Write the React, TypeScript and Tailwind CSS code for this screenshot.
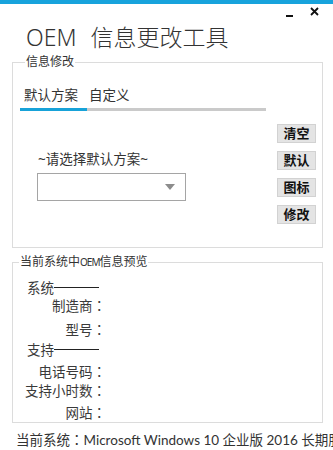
import React from "react";

const buttons = ["清空", "默认", "图标", "修改"];

// full-width colon drawn centered, as in the reference
const Colon = () => <span className="font-['Noto_Sans_CJK_TC',sans-serif] leading-none">：</span>;

export default function App() {
  return (
    <div className="h-[450px] w-[333px] overflow-hidden bg-white font-['Noto_Sans','Noto_Sans_CJK_SC',sans-serif] text-[#333]">
      {/* accent bar */}
      <div className="h-[4px] bg-[#18a3dc]" />

      {/* window controls */}
      <div className="flex h-[18px] items-center justify-end gap-[17px] pr-[14px]">
        <span className="mt-[5px] block h-[2px] w-[7px] bg-[#111]" />
        <svg width="9" height="9" viewBox="0 0 9 9" className="mt-[-3px]">
          <path d="M1 1 L8 8 M8 1 L1 8" stroke="#111" strokeWidth="1.8" />
        </svg>
      </div>

      {/* title */}
      <div className="h-[33px] pl-[26px] pt-[4px]">
        <h1 className="text-[23px] font-light leading-none">
          <span className="mr-[14px]">OEM</span>信息更改工具
        </h1>
      </div>

      {/* group 1 */}
      <fieldset className="ml-[12px] h-[193px] w-[311px] border border-[#dcdcdc] pl-[7px]">
        <legend className="ml-[5px] px-[1px] text-[12px] leading-[14px]">信息修改</legend>
        <div className="flex">
          <div className="w-[246px]">
            <div className="mt-[17px] flex text-[13.5px] leading-[18px]">
              <div className="w-[67px] pl-[4px]">默认方案</div>
              <div className="pl-[2px]">自定义</div>
            </div>
            <div className="mt-[4px] h-[3px] bg-[#cacaca]">
              <div className="h-[3px] w-[67px] bg-[#17a2d8]" />
            </div>
            <div className="mt-[39px] pl-[18px] text-[13.5px] leading-[18px]">~请选择默认方案~</div>
            <div className="ml-[17px] mt-[5px] flex h-[28px] w-[149px] items-center justify-end border border-[#a5a5a5] bg-white pr-[10px]">
              <svg width="10" height="6" viewBox="0 0 10 6">
                <path d="M0 0 L10 0 L5 6 Z" fill="#8c8c8c" />
              </svg>
            </div>
          </div>
          <div className="ml-[11px] mt-[55px] flex flex-col gap-[8px]">
            {buttons.map((b) => (
              <button
                key={b}
                className="flex h-[19px] w-[39px] items-center justify-center border border-[#d2d2d2] bg-[#e4e4e4] text-[13px] font-bold leading-none text-[#111]"
              >
                {b}
              </button>
            ))}
          </div>
        </div>
      </fieldset>

      {/* group 2 */}
      <fieldset className="ml-[12px] mt-[7px] h-[168px] w-[311px] border border-[#dcdcdc]">
        <legend className="ml-[6px] px-[1px] text-[12px] leading-[14px]">
          当前系统中<span className="text-[10px] tracking-[-1px]">OEM</span>信息预览
        </legend>
        <div className="text-[13.5px] leading-[18px] text-[#3a3a3a]">
          <div className="ml-[14px] mt-[10px] flex h-[18px] items-center">
            <span>系统</span>
            <span className="mt-[-2px] block h-[1px] w-[45px] bg-[#222]" />
          </div>
          <div className="h-[18px] w-[93px] text-right">制造商<Colon /></div>
          <div className="mt-[6px] h-[18px] w-[93px] text-right">型号<Colon /></div>
          <div className="ml-[14px] mt-[2px] flex h-[18px] items-center">
            <span>支持</span>
            <span className="mt-[-2px] block h-[1px] w-[45px] bg-[#222]" />
          </div>
          <div className="mt-[4px] h-[18px] w-[93px] text-right">电话号码<Colon /></div>
          <div className="mt-[1px] h-[18px] w-[93px] text-right">支持小时数<Colon /></div>
          <div className="mt-[4px] h-[18px] w-[93px] text-right">网站<Colon /></div>
        </div>
      </fieldset>

      {/* footer */}
      <div className="mt-[8px] h-[18px] whitespace-nowrap pl-[16px] font-['Lato','Noto_Sans_CJK_SC',sans-serif] text-[13.5px] leading-[18px] text-[#333]">
        当前系统<Colon />Microsoft Windows 10 企业版 2016 长期服务版
      </div>
    </div>
  );
}
